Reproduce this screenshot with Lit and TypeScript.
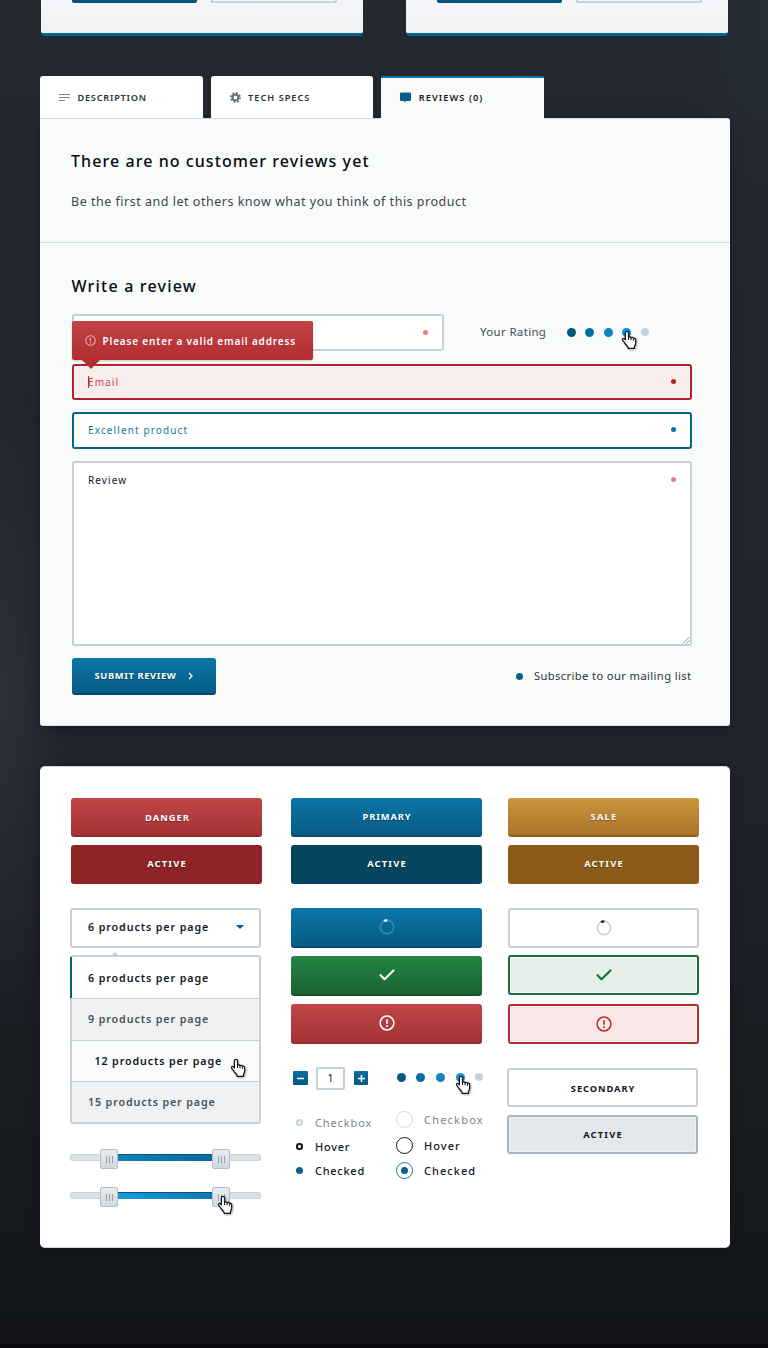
import { LitElement, html, css } from "lit";
import { customElement } from "lit/decorators.js";

const hand = html`<svg class="hand" width="18" height="22" viewBox="0 0 17 21">
  <path
    d="M5.6 1.2c.9 0 1.5.6 1.5 1.5v4.100c.3-.4 2-.5 2.400.5.6-.5 2-.4 2.300.7.8-.4 2.100 0 2.100 1.300v3.200c0 1.300-.9 2.500-1.200 3.600v1.400H6.600v-1.200c-1-1.200-2.300-2.500-3.200-4-.5-.9-1.500-1.900-2-2.800-.5-1.100.9-1.900 1.900-1.100l.8.9V2.700c0-.9.6-1.500 1.500-1.500z"
    fill="#fff"
    stroke="#14171f"
    stroke-width="1.2"
    stroke-linejoin="round"
  />
  <path d="M7.100 6.600v3M9.500 7.500v2.300M11.800 8.300v2" stroke="#14171f" stroke-width="1" fill="none" />
</svg>`;

const alertIcon = (cls: string) => html`<svg class=${cls} viewBox="0 0 16 16">
  <circle cx="8" cy="8" r="6.9" fill="none" stroke="currentColor" stroke-width="1.5" />
  <path d="M8 4.200v4.600M8 10.300v1.700" stroke="currentColor" stroke-width="1.7" fill="none" />
</svg>`;

const checkIcon = html`<svg class="check" viewBox="0 0 16 12">
  <path d="M1.500 6.200l4 4L14.500 1.400" fill="none" stroke="currentColor" stroke-width="2.1" stroke-linecap="round" stroke-linejoin="round" />
</svg>`;

const spinner = html`<svg class="spin" viewBox="0 0 16 16">
  <circle class="ring" cx="8" cy="8" r="6.7" fill="none" stroke-width="1.5" />
  <path d="M5 2A6.700 6.700 0 0 1 8.300 1.300" fill="none" stroke="currentColor" stroke-width="2.2" />
</svg>`;

const rating = html`<div class="dots">
  <i class="d1"></i><i class="d2"></i><i class="d3"></i><i class="d4">${hand}</i><i class="d5"></i>
</div>`;

const grab = (over: unknown = "") => html`<div class="grab"><s></s><s></s><s></s>${over}</div>`;

const t = (cls: string, text: string) => html`<span class="t ${cls}">${text}</span>`;

@customElement("app-root")
export class AppRoot extends LitElement {
  static styles = css`
    :host {
      display: block;
      box-sizing: border-box;
      height: 1348px;
      overflow: hidden;
      font-family: "Noto Sans", "Open Sans", sans-serif;
      font-size: 10px;
      color: #14181f;
      background:
        linear-gradient(to top, #0a0910 0, #0a0910 3px, transparent 5px),
        radial-gradient(70px 320px at 0 700px, #2b3039 0, transparent 100%),
        radial-gradient(90px 180px at 768px 20px, #272e37 0, transparent 100%),
        linear-gradient(#242930 0, #22272f 300px, #20252d 740px, #1b1f25 1000px, #15181d 1250px, #131518 1348px);
    }
    * { box-sizing: border-box; }
    svg { display: block; flex: none; }
    .t { white-space: nowrap; display: block; }
    .page { width: 690px; margin: 0 auto 0 40px; }

    .products { display: flex; gap: 43px; height: 36px; margin: 0 2px 0 1px; }
    .product {
      flex: 1; display: flex; gap: 14px; padding: 0 26px 0 31px;
      background: linear-gradient(#f5f6f9, #eff1f2);
      border-bottom: 3px solid #056391; border-radius: 0 0 4px 4px;
    }
    .product b { width: 125px; height: 3px; background: #05527a; border-radius: 0 0 2px 2px; }
    .product b + b { width: 126px; background: #f5f6f9; border: 2px solid #c5d0d9; border-top: 0; }

    .tabs { display: flex; gap: 8px; margin-top: 40px; height: 42px; }
    .tab {
      width: 162.6px; display: flex; align-items: center; gap: 7.500px; padding: 1.5px 0 0 19px;
      background: #fff; border-radius: 3px 3px 0 0; font-weight: 600; font-size: 9.2px; color: #2b323b;
    }
    .tab svg { width: 11px; height: 11px; }
    .tab.on {
      background: #f9fbfa; border-top: 2px solid #0a76ab; color: #14181f; height: 43px; padding-top: 0; padding-bottom: 2px;
      position: relative; border-radius: 2px 2px 0 0;
    }
    .tab.on svg { color: #07608c; }
    .desc { letter-spacing: .76px; }
    .specs { letter-spacing: 1px; }
    .revs { letter-spacing: 1.08px; }
    .panel { background: #f9fbfa; border-radius: 0 3px 3px 3px; height: 608px; border-top: 1px solid #d3dbe2; box-shadow: 0 3px 14px #0004; border-bottom: 1px solid #d6dde3; }
    .intro { height: 124px; padding: 29px 31px 0; border-bottom: 1px solid #d5dde3; }
    h2 { margin: 0; font-weight: 500; font-size: 16px; line-height: 26px; color: #060a12; letter-spacing: 1.07px; }
    .form h2 { letter-spacing: 1.2px; margin-left: -.5px; }
    .intro p { margin: 15px 0 0; font-size: 12.5px; line-height: 26px; color: #40464c; letter-spacing: .51px; }
    .form { padding: 30px 38px 0 32px; }
    .row { display: flex; align-items: center; position: relative; }
    .first { margin-top: 15px; height: 37px; }
    .field {
      height: 37px; border: 2px solid #c5d0d9; border-radius: 3px; background: #fff; flex: 1;
      display: flex; align-items: center; justify-content: space-between; padding: 0 14px 2px; font-size: 10px;
    }
    .name { flex: none; width: 372px; justify-content: flex-end; padding-bottom: 0; }
    .req { width: 5px; height: 5px; border-radius: 50%; background: #e08083; }
    .email { margin-top: 13px; height: 36px; padding-bottom: 1px; border-color: #b92025; background: #f9ecec; color: #c84a50; box-shadow: inset 0 0 0 1px #fff; letter-spacing: 1.1px; }
    .email .req { background: #b92025; }
    .caret { border-left: 1px solid #b92025; line-height: 12px; text-indent: -1px; }
    .good { margin-top: 12px; border-color: #056391; color: #1a769e; letter-spacing: 1.12px; }
    .good .req { background: #056fa0; }
    .area { height: 185px; margin-top: 12px; align-items: flex-start; padding-top: 10px; position: relative; letter-spacing: 1.1px; }
    .area .req { margin-top: 4px; }
    .grip { position: absolute; right: 0; bottom: 0; width: 8px; height: 8px; }
    .tip {
      position: absolute; left: 0; top: 7px; width: 241px; height: 39px; border-radius: 2px;
      display: flex; align-items: center; gap: 6.500px; padding-left: 13px;
      background: linear-gradient(#c04345, #b42d31); color: #fff; font-weight: 600; letter-spacing: .83px;
      box-shadow: 0 1px 2px #0003;
    }
    .tip::after {
      content: ""; position: absolute; left: 10px; top: 39px; border: 9px solid transparent; border-bottom: 0; border-top-color: #b42d31;
    }
    .i11 { width: 11px; height: 11px; color: #f0a9a9; }
    .i16 { width: 16px; height: 16px; }
    .rate { font-size: 11.5px; color: #484e56; margin-left: 36px; width: 86.5px; letter-spacing: .33px; padding-bottom: 2px; }
    .dots { display: flex; gap: 9.6px; padding-bottom: 1px; }
    .dots i { width: 9px; height: 9px; border-radius: 50%; position: relative; }
    .dots .d5 { width: 8px; height: 8px; background: #c5d0d8; }
    .d1 { background: #07587f; } .d2 { background: #096fa0; } .d3 { background: #0d88c3; }
    .d4 { background: #0d96db; }
    .hand { position: absolute; left: -1px; top: 2px; filter: drop-shadow(1px 1px 1px #0005); }
    .foot { display: flex; justify-content: space-between; align-items: center; margin-top: 12px; }
    .sub { display: flex; align-items: center; gap: 11px; font-size: 11.2px; color: #2d333b; letter-spacing: .38px; padding: 0 .6px 2px 0; }
    .sub i { width: 7px; height: 7px; border-radius: 50%; background: #07608c; margin-top: 1px; }
    .btn {
      height: 39px; border-radius: 3px; display: flex; align-items: center; justify-content: center;
      font-weight: 700; font-size: 9.3px; color: #fff; border-bottom: 2px solid;
      text-shadow: 0 1px 1px #0006;
    }
    .btn .t { padding: 0 0 0 1px; letter-spacing: 1.2px; }
    .btn .danger { letter-spacing: 1.06px; padding: 2px 0 0 2px; }
    .btn .primary, .btn .second { letter-spacing: .92px; }
    .submit { width: 144px; height: 37px; gap: 12px; }
    .btn .send { letter-spacing: .64px; padding-left: 0; }
    .blue { background: linear-gradient(#0a76a8, #075b84); border-color: #064a6c; }
    .red { background: linear-gradient(#c24547, #a33335); border-color: #922b2e; }
    .gold { background: linear-gradient(#cc943d, #ab752a); border-color: #916122; }
    .green { background: linear-gradient(#238544, #1b6233); border-color: #164f2a; }
    .redA { background: #8e2426; border-color: #8e2426; }
    .blueA { background: #05455f; border-color: #05455f; }
    .goldA { background: #8b5b17; border-color: #8b5b17; }
    .tall { height: 40px; }
    .flat { border: 2px solid #c5d0d9; background: #fff; color: #14181f; text-shadow: none; }
    .flat .second { padding-top: 1px; }
    .flatG { border: 2px solid #176d36; background: #e5eee8; color: #176d36; box-shadow: inset 0 0 0 1px #fff; padding-left: 1px; }
    .flatR { border: 2px solid #b92c30; background: #f9e8e8; color: #b92c30; box-shadow: inset 0 0 0 1px #fff; }
    .flatA { border: 2px solid #a5b4c1; background: #e3e8ec; color: #14181f; text-shadow: none; box-shadow: inset 0 0 0 1px #eef1f4; padding-bottom: 1px; }
    .check { width: 16px; height: 12px; }
    .spin { width: 16px; height: 16px; }
    .ring { stroke: #3d88ab; }
    .flat .ring { stroke: #c9ccd0; }

    .kit { margin-top: 40px; height: 482px; background: #fff; border-radius: 5px; padding: 31px 31px 0; display: flex; box-shadow: 0 3px 14px #0004; border-bottom: 1px solid #ccd5dc; border-top: 1px solid #ccd5dc; }
    .col { width: 191px; flex: none; }
    .c2 { margin-left: 29px; }
    .c3 { margin-left: 26px; }
    .mt7 { margin-top: 7px; }
    .mt8 { margin-top: 8px; }
    .mt9 { margin-top: 9px; }
    .mt24 { margin-top: 24px; }
    .left1 { margin-left: -1px; margin-right: 1px; }
    .select { height: 40px; border: 2px solid #c5d0d9; border-radius: 3px; display: flex; align-items: center; justify-content: space-between; padding: 0 15.5px 2px 16px; font-weight: 600; font-size: 10.7px; letter-spacing: .9px; }
    .arrow { border: 4px solid transparent; border-bottom: 0; border-top-color: #07608c; }
    .menu { margin-top: 7px; height: 169px; border: 2px solid #c5d0d9; border-radius: 3px; font-weight: 600; font-size: 10.7px; letter-spacing: .9px; position: relative; display: flex; flex-direction: column; }
    .menu::before { content: ""; position: absolute; left: 39px; top: -5px; border: 4px solid transparent; border-top: 0; border-bottom-color: #c5d0d9; }
    .opt { flex: 1; display: flex; align-items: center; padding: 0 16px; border-top: 1px solid #c5d0d9; background: #eff1f3; color: #4a5057; position: relative; }
    .opt:first-child { background: #fff; color: #14181f; border: 0; padding-top: 1px; }
    .opt:first-child::before { content: ""; position: absolute; left: -2px; top: 0; width: 2px; height: 41px; background: #075b84; }
    .wide { letter-spacing: .87px; }
    .menu .hov { background: #f9fbfa; color: #14181f; padding: 0 0 0 22.5px; }
    .hov .hand { left: 158px; top: 17px; }
    .slider { display: flex; align-items: center; height: 20px; margin-top: 25px; }
    .slider.b { margin-top: 18px; }
    .slider i { height: 7px; background: #dce1e5; border: 1px solid #c9d2d9; border-radius: 3px 0 0 3px; width: 30px; flex: none; margin-bottom: 3px; border-right: 0; }
    .slider i:last-child { width: 31px; border: 1px solid #c9d2d9; border-left: 0; border-radius: 0 3px 3px 0; }
    .slider u { height: 7px; flex: 1; background: linear-gradient(90deg, #0d82bb, #086a9a); border-top: 1px solid #07547a; margin-bottom: 3px; }
    .slider.b u { background: linear-gradient(90deg, #1a9bdc, #0d7bb2); }
    .grab { width: 18px; height: 20px; border: 1px solid #b3bec8; border-radius: 2px; background: linear-gradient(#e9ecef, #d3d9de); position: relative; display: flex; justify-content: center; align-items: center; gap: 2px; }
    .grab s { width: 1px; height: 7px; background: #93a1ae; }
    .grab .hand { left: 4px; top: 7px; }
    .qty { display: flex; align-items: center; margin-top: 23px; height: 23px; padding-left: 2px; }
    .sq { width: 15px; height: 14px; border-radius: 1px; background: linear-gradient(#0a6d9c, #07587f); display: flex; align-items: center; justify-content: center; margin-bottom: 1px; flex: none; }
    .num { width: 29px; height: 23px; border: 2px solid #c5d0d9; border-radius: 2px; margin: 0 8px; display: flex; align-items: center; justify-content: center; font-size: 10.5px; padding-bottom: 1px; flex: none; }
    .num + .sq { margin-left: 1px; width: 14px; }
    .qty .dots { margin: 0 0 1px 28.5px; gap: 10.7px; flex: none; }
    .opts { display: flex; margin-top: 17px; }
    .checks { flex: none; width: 103px; padding: 3px 0 0 4.5px; display: grid; grid-auto-rows: 24px; align-content: start; }
    .checks div, .radios div { display: flex; align-items: center; font-size: 11px; font-weight: 500; letter-spacing: .72px; }
    .checks i { width: 7px; height: 7px; margin-right: 12.5px; border-radius: 50%; flex: none; }
    .radios { flex: none; padding-left: 2px; display: grid; grid-auto-rows: 25.5px; align-content: start; }
    .radios div { letter-spacing: 1.05px; }
    .radios i { width: 17px; height: 17px; margin-right: 11px; border-radius: 50%; border: 1px solid #d3dade; display: flex; align-items: center; justify-content: center; flex: none; }
    .checks .dim, .radios .dim { color: #7d858c; font-weight: 400; letter-spacing: .88px; }
    .radios .dim { letter-spacing: 1.22px; }
    .o1 { border: 2px solid #c5d0d9; } .checks .o2 { border: 2px solid #14181f; border-radius: 3px; } .o3 { background: #07608c; }
    .radios .r2 { border-color: #14181f; } .radios .r3 { border-color: #1b79a5; }
    .r3 b { width: 7px; height: 7px; border-radius: 50%; background: #07608c; }
  `;

  render() {
    return html`
      <div class="page">
        <div class="products">
          <div class="product"><b></b><b></b></div>
          <div class="product"><b></b><b></b></div>
        </div>
        <div class="tabs">
          <div class="tab">
            <svg viewBox="0 0 11 11"><path d="M0 2.500h11M0 5.500h11M0 8.500h6" stroke="#7c8790" stroke-width="1.2" /></svg>
            ${t("desc", "DESCRIPTION")}
          </div>
          <div class="tab">
            <svg viewBox="0 0 12 12">
              <circle cx="6" cy="6" r="3.2" fill="none" stroke="#5f6b76" stroke-width="2.2" />
              <circle cx="6" cy="6" r="5" fill="none" stroke="#5f6b76" stroke-width="1.8" stroke-dasharray="1.96 1.96" />
            </svg>
            ${t("specs", "TECH SPECS")}
          </div>
          <div class="tab on">
            <svg viewBox="0 0 11 11"><path d="M1 .5h9a1 1 0 0 1 1 1v6.500a1 1 0 0 1-1 1H6L4 10.500V9H1a1 1 0 0 1-1-1V1.500a1 1 0 0 1 1-1z" fill="currentColor" /></svg>
            ${t("revs", "REVIEWS (0)")}
          </div>
        </div>
        <div class="panel">
          <div class="intro">
            <h2>There are no customer reviews yet</h2>
            <p>Be the first and let others know what you think of this product</p>
          </div>
          <div class="form">
            <h2>Write a review</h2>
            <div class="row first">
              <div class="field name"><i class="req"></i></div>
              ${t("rate", "Your Rating")} ${rating}
              <div class="tip">${alertIcon("i11")} ${t("", "Please enter a valid email address")}</div>
            </div>
            <div class="field email">${t("caret", "Email")}<i class="req"></i></div>
            <div class="field good">${t("", "Excellent product")}<i class="req"></i></div>
            <div class="field area">
              ${t("", "Review")}<i class="req"></i>
              <svg class="grip" viewBox="0 0 8 8"><path d="M1 7.500L7.500 1M4.500 7.500l3-3" stroke="#8a8f94" fill="none" /></svg>
            </div>
            <div class="foot">
              <div class="btn blue submit">
                ${t("send", "SUBMIT REVIEW")}
                <svg width="5" height="8" viewBox="0 0 5 8"><path d="M1 1l3 3-3 3" fill="none" stroke="#fff" stroke-width="1.3" /></svg>
              </div>
              <div class="sub"><i></i>${t("", "Subscribe to our mailing list")}</div>
            </div>
          </div>
        </div>
        <div class="kit">
          <div class="col">
            <div class="btn red">${t("danger", "DANGER")}</div>
            <div class="btn redA mt8">${t("", "ACTIVE")}</div>
            <div class="left1">
              <div class="select mt24">${t("", "6 products per page")}<i class="arrow"></i></div>
              <div class="menu">
                <div class="opt">${t("", "6 products per page")}</div>
                <div class="opt">${t("", "9 products per page")}</div>
                <div class="opt hov">${t("wide", "12 products per page")}${hand}</div>
                <div class="opt">${t("wide", "15 products per page")}</div>
              </div>
              <div class="slider"><i></i>${grab()}<u></u>${grab()}<i></i></div>
              <div class="slider b"><i></i>${grab()}<u></u>${grab(hand)}<i></i></div>
            </div>
          </div>
          <div class="col c2">
            <div class="btn blue">${t("primary", "PRIMARY")}</div>
            <div class="btn blueA mt8">${t("", "ACTIVE")}</div>
            <div class="btn blue tall mt24">${spinner}</div>
            <div class="btn green tall mt8">${checkIcon}</div>
            <div class="btn red tall mt8">${alertIcon("i16")}</div>
            <div class="qty">
              <div class="sq"><svg width="7" height="7"><path d="M0 3.500h7" stroke="#fff" stroke-width="1.5" /></svg></div>
              <div class="num">1</div>
              <div class="sq"><svg width="7" height="7"><path d="M0 3.500h7M3.500 0v7" stroke="#fff" stroke-width="1.5" /></svg></div>
              ${rating}
            </div>
            <div class="opts">
              <div class="checks">
                <div class="dim"><i class="o1"></i>${t("", "Checkbox")}</div>
                <div><i class="o2"></i>${t("", "Hover")}</div>
                <div><i class="o3"></i>${t("", "Checked")}</div>
              </div>
              <div class="radios">
                <div class="dim"><i></i>${t("", "Checkbox")}</div>
                <div><i class="r2"></i>${t("", "Hover")}</div>
                <div><i class="r3"><b></b></i>${t("", "Checked")}</div>
              </div>
            </div>
          </div>
          <div class="col c3">
            <div class="btn gold">${t("", "SALE")}</div>
            <div class="btn goldA mt8">${t("", "ACTIVE")}</div>
            <div class="btn flat tall mt24">${spinner}</div>
            <div class="btn flatG tall mt7">${checkIcon}</div>
            <div class="btn flatR tall mt9">${alertIcon("i16")}</div>
            <div class="left1">
              <div class="btn flat mt24">${t("second", "SECONDARY")}</div>
              <div class="btn flatA mt8">${t("", "ACTIVE")}</div>
            </div>
          </div>
        </div>
      </div>
    `;
  }
}
